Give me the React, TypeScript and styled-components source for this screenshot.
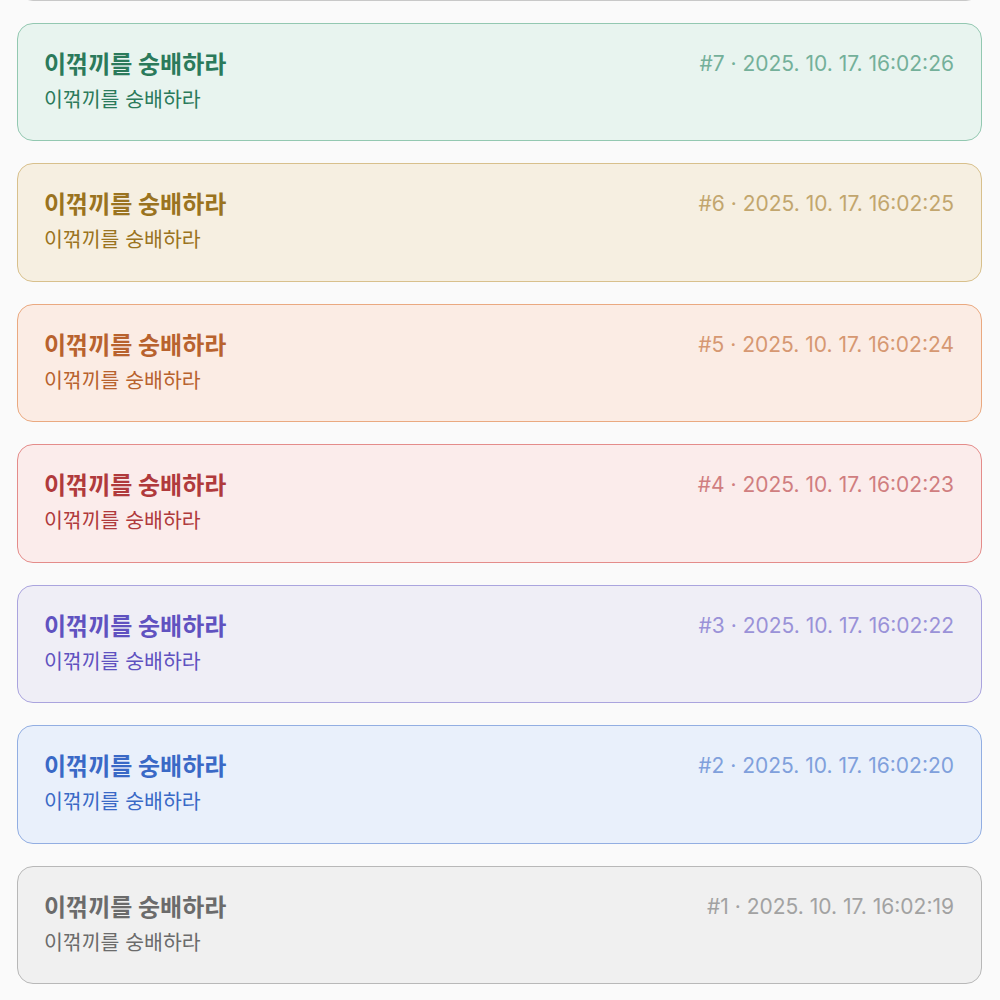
import React from "react";
import styled, { createGlobalStyle } from "styled-components";

const GlobalStyle = createGlobalStyle`
  html, body {
    margin: 0;
    padding: 0;
    background: #fafafa;
  }
  body {
    font-family: Inter, "Noto Sans CJK KR", "Noto Sans", sans-serif;
    overflow: hidden;
  }
`;

type Tone = {
  bg: string;
  border: string;
  title: string;
  meta: string;
};

const tones: Record<string, Tone> = {
  neutralTop: { bg: "#efefef", border: "#c8c8c8", title: "#6a6a6a", meta: "#a0a0a0" },
  green: { bg: "#e8f4ef", border: "#93c8b1", title: "#2b7a5b", meta: "#74b09a" },
  gold: { bg: "#f6efe1", border: "#d8c08c", title: "#9a7320", meta: "#c2a66e" },
  orange: { bg: "#fbece4", border: "#eaa980", title: "#b8622e", meta: "#d69872" },
  red: { bg: "#fbeceb", border: "#e48c8a", title: "#b03a3c", meta: "#d07e80" },
  purple: { bg: "#efeef6", border: "#aaa4de", title: "#6052c0", meta: "#9a92d8" },
  blue: { bg: "#e9f0fb", border: "#92aee2", title: "#3a69c6", meta: "#80a0dc" },
  gray: { bg: "#f0f0f0", border: "#b8b8b8", title: "#6b6b6b", meta: "#a2a2a2" },
};

const Page = styled.main`
  display: flex;
  flex-direction: column;
  gap: 22px;
  padding: 0 18px 0 17px;
  margin-top: -118px;
`;

const Card = styled.article<{ $tone: Tone }>`
  box-sizing: border-box;
  height: 118.5px;
  display: flex;
  flex-direction: column;
  padding: 24px 27px 0 26px;
  border-radius: 16px;
  border: 1px solid ${(p) => p.$tone.border};
  background: ${(p) => p.$tone.bg};
`;

const Header = styled.div`
  display: flex;
  align-items: center;
  justify-content: space-between;
`;

const Title = styled.h3<{ $tone: Tone }>`
  margin: 0;
  font-size: 24px;
  line-height: 34px;
  font-weight: 700;
  color: ${(p) => p.$tone.title};
`;

const Meta = styled.span<{ $tone: Tone }>`
  font-size: 21px;
  line-height: 32px;
  font-weight: 400;
  color: ${(p) => p.$tone.meta};
  margin-bottom: 2px;
`;

const Body = styled.p<{ $tone: Tone }>`
  margin: 4px 0 0;
  font-size: 20.5px;
  line-height: 28px;
  font-weight: 400;
  color: ${(p) => p.$tone.title};
`;

const items = [
  { n: 7, tone: tones.green, time: "2025. 10. 17. 16:02:26" },
  { n: 6, tone: tones.gold, time: "2025. 10. 17. 16:02:25" },
  { n: 5, tone: tones.orange, time: "2025. 10. 17. 16:02:24" },
  { n: 4, tone: tones.red, time: "2025. 10. 17. 16:02:23" },
  { n: 3, tone: tones.purple, time: "2025. 10. 17. 16:02:22" },
  { n: 2, tone: tones.blue, time: "2025. 10. 17. 16:02:20" },
  { n: 1, tone: tones.gray, time: "2025. 10. 17. 16:02:19" },
];

export default function App() {
  return (
    <>
      <GlobalStyle />
      <Page>
        <Card $tone={tones.neutralTop} aria-hidden="true" />
        {items.map((it) => (
          <Card key={it.n} $tone={it.tone}>
            <Header>
              <Title $tone={it.tone}>이꺾끼를 숭배하라</Title>
              <Meta $tone={it.tone}>
                #{it.n} · {it.time}
              </Meta>
            </Header>
            <Body $tone={it.tone}>이꺾끼를 숭배하라</Body>
          </Card>
        ))}
      </Page>
    </>
  );
}
